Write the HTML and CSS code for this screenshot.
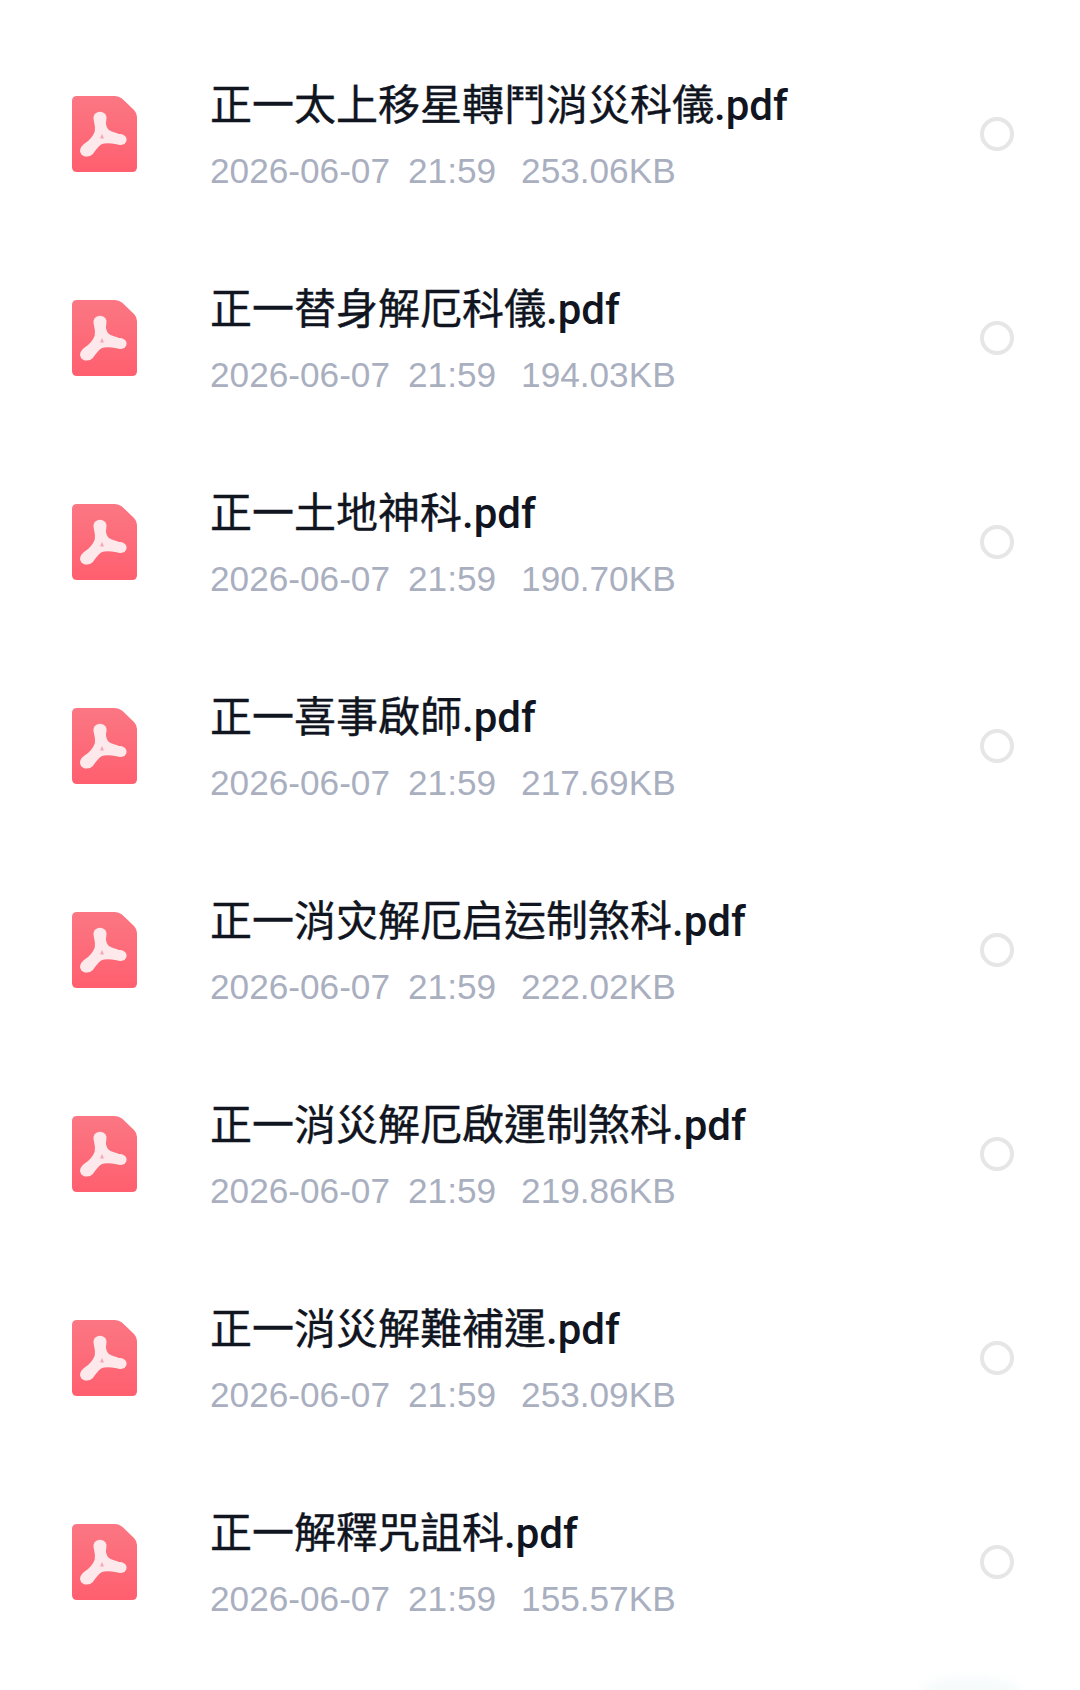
FILE: index.html
```html
<!DOCTYPE html>
<html lang="zh-Hant">
<head>
<meta charset="utf-8">
<title>PDF 文件列表</title>
<link rel="stylesheet" href="styles.css">
</head>
<body>
<svg class="defs" width="0" height="0" aria-hidden="true">
  <defs>
    <linearGradient id="pdfGrad" x1="0" y1="0" x2="0" y2="1">
      <stop offset="0" stop-color="#fb7783"/>
      <stop offset="1" stop-color="#ff5f6f"/>
    </linearGradient>
    <symbol id="pdf" viewBox="0 0 65 76">
      <path d="M5 0H43Q47 0 50 2.500L62 14Q65 17 65 21V71Q65 76 60 76H5Q0 76 0 71V5Q0 0 5 0Z" fill="url(#pdfGrad)"/>
      <path d="M28 17C32 17 34 20 33 24C32 28 33 31 35 34C37 37 41 37 46 39C52 39 54 42 53 45C52 48 48 48 45 47C40 46 34 45 29 47C25 49 23 53 20 57C17 60 12 60 10 57C8 53 11 50 14 48C19 45 22 41 24 36C25 31 24 28 23 24C22 20 24 17 28 17Z" fill="#fde9eb" stroke="#fde9eb" stroke-width="2.600" stroke-linejoin="round"/>
      <path d="M30 38L32 42.500H28Z" fill="#f6a5af"/>
    </symbol>
  </defs>
</svg>
<main class="list">
  <div class="row"><svg class="icon"><use href="#pdf"/></svg><div class="info"><div class="name">正一太上移星轉鬥消災科儀<span class="ext">.pdf</span></div><div class="meta"><span>2026-06-07</span><span>21:59</span><span class="size">253.06KB</span></div></div><span class="radio"></span></div>
  <div class="row"><svg class="icon"><use href="#pdf"/></svg><div class="info"><div class="name">正一替身解厄科儀<span class="ext">.pdf</span></div><div class="meta"><span>2026-06-07</span><span>21:59</span><span class="size">194.03KB</span></div></div><span class="radio"></span></div>
  <div class="row"><svg class="icon"><use href="#pdf"/></svg><div class="info"><div class="name">正一土地神科<span class="ext">.pdf</span></div><div class="meta"><span>2026-06-07</span><span>21:59</span><span class="size">190.70KB</span></div></div><span class="radio"></span></div>
  <div class="row"><svg class="icon"><use href="#pdf"/></svg><div class="info"><div class="name">正一喜事啟師<span class="ext">.pdf</span></div><div class="meta"><span>2026-06-07</span><span>21:59</span><span class="size">217.69KB</span></div></div><span class="radio"></span></div>
  <div class="row"><svg class="icon"><use href="#pdf"/></svg><div class="info"><div class="name">正一消灾解厄启运制煞科<span class="ext">.pdf</span></div><div class="meta"><span>2026-06-07</span><span>21:59</span><span class="size">222.02KB</span></div></div><span class="radio"></span></div>
  <div class="row"><svg class="icon"><use href="#pdf"/></svg><div class="info"><div class="name">正一消災解厄啟運制煞科<span class="ext">.pdf</span></div><div class="meta"><span>2026-06-07</span><span>21:59</span><span class="size">219.86KB</span></div></div><span class="radio"></span></div>
  <div class="row"><svg class="icon"><use href="#pdf"/></svg><div class="info"><div class="name">正一消災解難補運<span class="ext">.pdf</span></div><div class="meta"><span>2026-06-07</span><span>21:59</span><span class="size">253.09KB</span></div></div><span class="radio"></span></div>
  <div class="row"><svg class="icon"><use href="#pdf"/></svg><div class="info"><div class="name">正一解釋咒詛科<span class="ext">.pdf</span></div><div class="meta"><span>2026-06-07</span><span>21:59</span><span class="size">155.57KB</span></div></div><span class="radio"></span></div>
</main>
</body>
</html>
```
FILE: styles.css
```css
* { box-sizing: border-box; }
html, body { margin: 0; padding: 0; background: #fff; }
body {
  position: relative;
  width: 1080px;
  height: 1690px;
  overflow: hidden;
  font-family: Roboto, "Noto Sans CJK TC", sans-serif;
}
body::after {
  content: "";
  position: absolute;
  left: 920px;
  bottom: -16px;
  width: 100px;
  height: 28px;
  border-radius: 50%;
  background: #f5fafb;
  filter: blur(6px);
}
.defs { display: block; height: 0; }
.list {
  display: flex;
  flex-direction: column;
  padding: 32px 66px 0 72px;
}
.row {
  display: flex;
  align-items: center;
  height: 204px;
}
.icon {
  width: 65px;
  height: 76px;
  flex: none;
  margin-right: 73px;
}
.info {
  flex: 1;
  display: flex;
  flex-direction: column;
  gap: 19px;
  margin-top: 5px;
  min-width: 0;
}
.name {
  font-size: 42px;
  line-height: 50px;
  color: #10151f;
  font-weight: 400;
  -webkit-text-stroke: 0.35px #10151f;
  white-space: nowrap;
}
.ext {
  font-weight: 500;
  -webkit-text-stroke: 0;
}
.meta {
  display: flex;
  gap: 18px;
  font-family: "Liberation Sans", Arial, sans-serif;
  font-size: 35.2px;
  line-height: 42px;
  color: #a9afbf;
}
.size { margin-left: 7px; }
.radio {
  width: 34px;
  height: 34px;
  flex: none;
  border: 4px solid #e6e6e6;
  border-radius: 50%;
}
```
